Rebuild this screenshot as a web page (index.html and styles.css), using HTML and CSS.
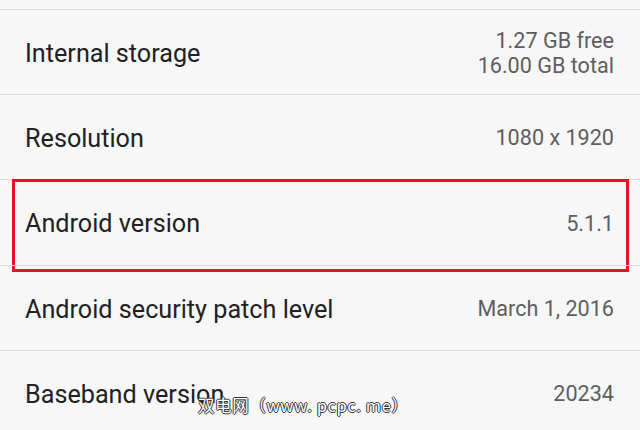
FILE: index.html
```html
<!DOCTYPE html>
<html>
<head>
<meta charset="utf-8">
<link rel="stylesheet" href="styles.css">
</head>
<body>
<div class="list">
  <div class="row">
    <div class="label">Internal storage</div>
    <div class="value">1.27 GB free<br>16.00 GB total</div>
  </div>
  <div class="row">
    <div class="label">Resolution</div>
    <div class="value">1080 x 1920</div>
  </div>
  <div class="row highlighted">
    <div class="label">Android version</div>
    <div class="value">5.1.1</div>
    <div class="mark"></div>
  </div>
  <div class="row">
    <div class="label">Android security patch level</div>
    <div class="value">March 1, 2016</div>
  </div>
  <div class="row">
    <div class="label">Baseband version</div>
    <div class="value">20234</div>
  </div>
</div>
<div class="watermark">双电网（www. pcpc. me）</div>
</body>
</html>
```
FILE: styles.css
```css
html, body {
  margin: 0;
  padding: 0;
  background: #f7f7f7;
  overflow: hidden;
  height: 430px;
}
body {
  position: relative;
  font-family: Roboto, "Noto Sans", sans-serif;
}
.list {
  padding-top: 9px;
}
.row {
  position: relative;
  height: 84px;
  border-top: 1px solid #dadada;
  display: flex;
  align-items: center;
  justify-content: space-between;
  padding: 0 26px 0 25px;
}
.row.highlighted {
  height: 85px;
}
.label {
  font-size: 25.2px;
  color: #212121;
  padding-top: 2px;
}
.value {
  font-size: 21.6px;
  line-height: 25px;
  color: #5e5e5e;
  text-align: right;
  padding-top: 1px;
}
.mark {
  position: absolute;
  left: 12px;
  top: -1px;
  width: 611px;
  height: 87px;
  border: 3px solid #ec1020;
}
.watermark {
  position: absolute;
  left: 198px;
  top: 394px;
  font-family: "Noto Sans CJK SC", sans-serif;
  font-size: 16.5px;
  line-height: 22px;
  letter-spacing: 0.6px;
  color: #ffffff;
  text-shadow: 1px 0 0 #333, -1px 0 0 #333, 0 1px 0 #333, 0 -1px 0 #333;
}
```
